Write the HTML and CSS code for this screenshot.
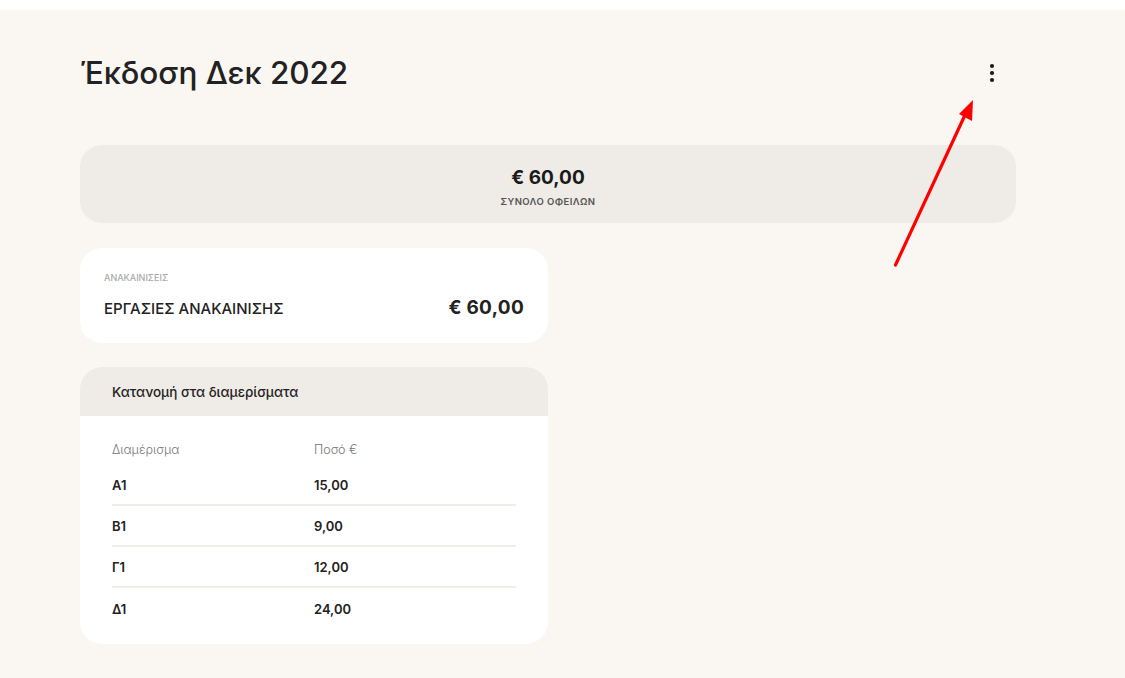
FILE: index.html
```html
<!DOCTYPE html>
<html lang="el">
<head>
<meta charset="utf-8">
<title>Έκδοση Δεκ 2022</title>
<link rel="stylesheet" href="styles.css">
</head>
<body>
<div class="page">
  <div class="content">
    <header class="head">
      <h1 class="title">Έκδοση Δεκ 2022</h1>
      <button class="kebab" aria-label="menu">
        <svg width="6" height="20" viewBox="0 0 6 20"><circle cx="3" cy="3" r="2.1" fill="#1a1a1a"/><circle cx="3" cy="10" r="2.1" fill="#1a1a1a"/><circle cx="3" cy="17" r="2.1" fill="#1a1a1a"/></svg>
      </button>
    </header>

    <section class="summary">
      <div class="summary-amount">€ 60,00</div>
      <div class="summary-label">ΣΥΝΟΛΟ ΟΦΕΙΛΩΝ</div>
    </section>

    <section class="card expense">
      <div class="expense-cat">ΑΝΑΚΑΙΝΙΣΕΙΣ</div>
      <div class="expense-row">
        <span class="expense-name">ΕΡΓΑΣΙΕΣ ΑΝΑΚΑΙΝΙΣΗΣ</span>
        <span class="expense-amount">€ 60,00</span>
      </div>
    </section>

    <section class="card dist">
      <div class="dist-head">Κατανομή στα διαμερίσματα</div>
      <div class="dist-table">
        <div class="row row-head"><span class="c1">Διαμέρισμα</span><span>Ποσό €</span></div>
        <div class="row"><span class="c1">Α1</span><span>15,00</span></div>
        <div class="row"><span class="c1">Β1</span><span>9,00</span></div>
        <div class="row"><span class="c1">Γ1</span><span>12,00</span></div>
        <div class="row last"><span class="c1">Δ1</span><span>24,00</span></div>
      </div>
    </section>
  </div>
  <svg class="arrow" width="1125" height="678" viewBox="0 0 1125 678">
    <line x1="895.5" y1="265" x2="965" y2="115" stroke="#ff0000" stroke-width="3.2" stroke-linecap="round"/>
    <polygon points="973,100 959,114 972,121" fill="#ff0000"/>
  </svg>
</div>
</body>
</html>
```
FILE: styles.css
```css
* { box-sizing: border-box; }
html, body { margin: 0; padding: 0; background: #ffffff; }
body {
  font-family: "Inter", "Noto Sans", "DejaVu Sans", sans-serif;
  color: #1e1e1e;
}
.page {
  position: relative;
  margin-top: 10px;
  height: 668px;
  background: #faf7f3;
  overflow: hidden;
}
.content {
  width: 936px;
  margin-left: 80px;
  padding-top: 30px;
}
.head {
  height: 64px;
  display: flex;
  align-items: center;
  justify-content: space-between;
}
.title {
  margin: 0;
  font-size: 31.5px;
  font-weight: 500;
  letter-spacing: -0.1px;
  color: #222;
}
.kebab {
  border: 0;
  background: none;
  padding: 0;
  margin-right: 21px;
  margin-top: 1px;
  width: 6px;
  height: 20px;
  display: flex;
}
.summary {
  margin-top: 41px;
  height: 78px;
  background: #efebe6;
  border-radius: 22px;
  display: flex;
  flex-direction: column;
  align-items: center;
  justify-content: center;
}
.summary-amount {
  font-size: 19px;
  font-weight: 700;
  line-height: 24px;
  margin-top: 6px;
  color: #1a1a1a;
}
.summary-label {
  font-size: 9.5px;
  font-weight: 600;
  color: #555;
  letter-spacing: 0.4px;
  line-height: 12px;
  margin-top: 6px;
}
.card {
  width: 468px;
  background: #ffffff;
  border-radius: 22px;
}
.expense {
  margin-top: 25px;
  height: 95px;
  padding: 24px 24px 0 24px;
}
.expense-cat {
  font-size: 9px;
  font-weight: 500;
  color: #aaa;
  line-height: 12px;
}
.expense-row {
  margin-top: 12px;
  display: flex;
  justify-content: space-between;
  align-items: center;
  height: 22px;
}
.expense-name {
  font-size: 15px;
  font-weight: 500;
  color: #222;
  padding-top: 3px;
}
.expense-amount {
  font-size: 19px;
  font-weight: 700;
  letter-spacing: 0.3px;
  color: #222;
}
.dist {
  margin-top: 24px;
  height: 277px;
  overflow: hidden;
}
.dist-head {
  height: 49px;
  background: #efebe6;
  display: flex;
  align-items: center;
  padding-left: 32px;
  font-size: 13.5px;
  font-weight: 500;
  color: #222;
}
.dist-table {
  padding: 17px 32px 15px 32px;
}
.row {
  display: flex;
  align-items: center;
  height: 41px;
  border-bottom: 2px solid #f1eeea;
  font-size: 13px;
  font-weight: 600;
  color: #222;
}
.row .c1 { width: 202px; }
.row.last { border-bottom: 0; }
.row-head {
  height: 32px;
  border-bottom: 0;
  font-weight: 300;
  color: #777;
  font-size: 12.5px;
}
.arrow {
  position: absolute;
  left: 0;
  top: -10px;
  pointer-events: none;
}
```
